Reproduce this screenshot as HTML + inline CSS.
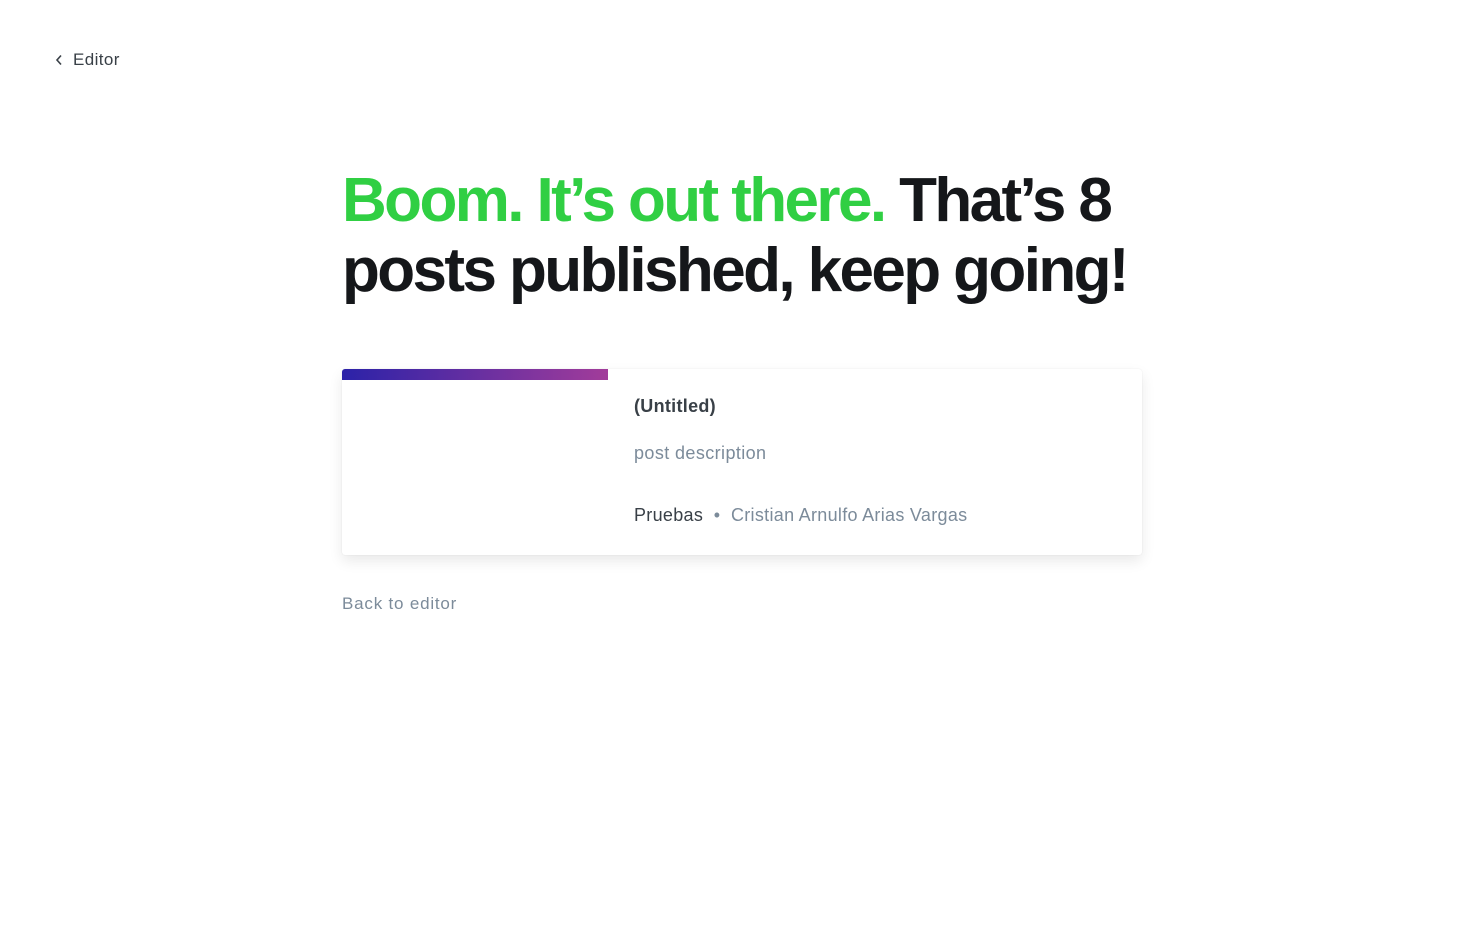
<!DOCTYPE html>
<html><head><meta charset="utf-8"><style>
*{margin:0;padding:0;box-sizing:border-box}
body{width:1483px;height:931px;background:#fff;font-family:"Liberation Sans",sans-serif;position:relative;overflow:hidden}
.back{position:absolute;left:55px;top:50px;font-size:17px;color:#394047;display:flex;align-items:center;gap:10px;letter-spacing:.4px}
h1{position:absolute;left:342px;top:166px;width:900px;font-size:62px;line-height:70px;font-weight:bold;color:#15171a;letter-spacing:-2.6px;white-space:nowrap}
h1 span{color:#30cf43}
.card{position:absolute;left:342px;top:369px;width:800px;height:186px;background:#fff;border-radius:3px;box-shadow:0 6px 14px rgba(0,0,0,.09),0 0 1px rgba(0,0,0,.12)}
.bar{position:absolute;left:0;top:0;width:266px;height:11px;border-radius:3px 0 0 0;background:linear-gradient(90deg,#2b22a8,#a23c9a)}
.t{position:absolute;left:292px;top:27px;font-size:18px;font-weight:bold;color:#394047;letter-spacing:.3px}
.d{position:absolute;left:292px;top:74px;font-size:18px;color:#7c8b9a;letter-spacing:.4px}
.m{position:absolute;left:292px;top:136px;font-size:18px;color:#7c8b9a;letter-spacing:.3px}
.m b{font-weight:normal;color:#394047}
.bt{position:absolute;left:342px;top:594px;font-size:17px;color:#7c8b9a;letter-spacing:.8px}
</style></head><body>
<div class="back"><svg width="8" height="12" viewBox="0 0 8 12"><path d="M6 1.5L2 6l4 4.5" fill="none" stroke="#394047" stroke-width="1.6"/></svg>Editor</div>
<h1><span>Boom. It’s out there.</span> That’s 8<br>posts published, keep going!</h1>
<div class="card"><div class="bar"></div>
<div class="t">(Untitled)</div>
<div class="d">post description</div>
<div class="m"><b>Pruebas</b> &nbsp;•&nbsp; Cristian Arnulfo Arias Vargas</div>
</div>
<div class="bt">Back to editor</div>
</body></html>
